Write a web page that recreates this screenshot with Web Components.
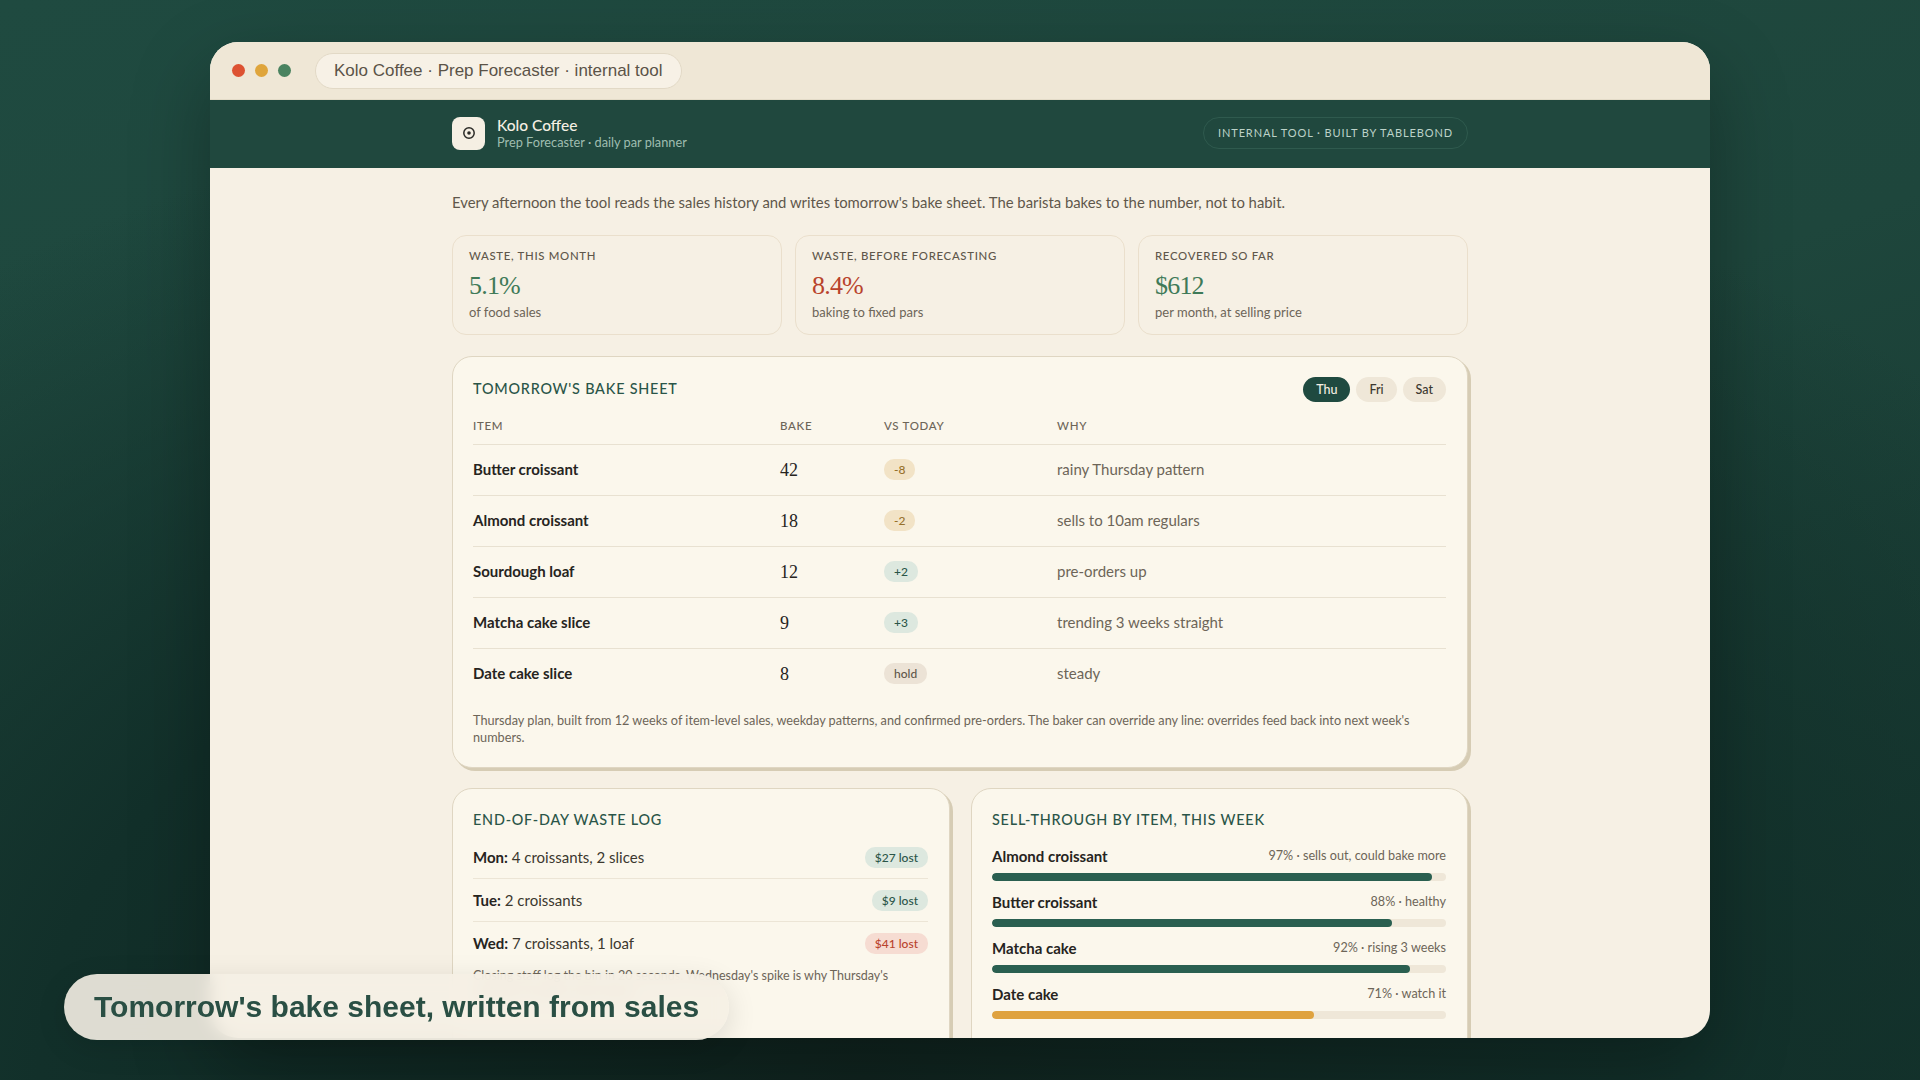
<!DOCTYPE html>
<html>
<head>
<meta charset="utf-8">
<title>Kolo Coffee</title>
<style>
html, body { margin: 0; height: 100%; }
body {
  width: 1920px; height: 1080px; overflow: hidden; position: relative;
  font-family: "Lato", sans-serif;
  background: radial-gradient(ellipse 1500px 1000px at 45% 100%, #10241f 0%, #12302a 55%, transparent 100%), linear-gradient(160deg, #1f4a40 0%, #1e463c 50%, #14332c 100%);
}
</style>
</head>
<body>
<stage-frame>
  <app-window title-text="Kolo Coffee · Prep Forecaster · internal tool">
    <app-header></app-header>
    <page-main>
      <p-intro>Every afternoon the tool reads the sales history and writes tomorrow's bake sheet. The barista bakes to the number, not to habit.</p-intro>
      <kpi-row>
        <kpi-card label="Waste, this month" value="5.1%" sub="of food sales" tone="good"></kpi-card>
        <kpi-card label="Waste, before forecasting" value="8.4%" sub="baking to fixed pars" tone="bad"></kpi-card>
        <kpi-card label="Recovered so far" value="$612" sub="per month, at selling price" tone="good"></kpi-card>
      </kpi-row>
      <bake-sheet></bake-sheet>
      <two-col>
        <waste-log></waste-log>
        <sell-through></sell-through>
      </two-col>
    </page-main>
  </app-window>
  <caption-pill>Tomorrow's bake sheet, written from sales</caption-pill>
</stage-frame>

<script>
const FONT = `"Lato", sans-serif`;
const SERIF = `"Liberation Serif", serif`;

class StageFrame extends HTMLElement {
  constructor() {
    super();
    this.attachShadow({ mode: "open" }).innerHTML = `
      <style>
        :host { display: block; width: 1920px; height: 1080px; padding: 42px 210px; box-sizing: border-box; }
      </style>
      <slot></slot>`;
  }
}

class AppWindow extends HTMLElement {
  constructor() {
    super();
    this.attachShadow({ mode: "open" }).innerHTML = `
      <style>
        :host { display: flex; flex-direction: column; width: 1500px; height: 996px; border-radius: 28px; overflow: hidden;
          background: #f6f0e4; box-shadow: 0 30px 80px rgba(0,0,0,.3); }
        .bar { flex: none; height: 58px; box-sizing: border-box; background: #efe7d6; display: flex; align-items: center; padding: 0 22px; gap: 10px; border-bottom: 1px solid #e3dbc8; }
        .dot { width: 13px; height: 13px; border-radius: 50%; }
        .addr { margin-left: 14px; height: 36px; box-sizing: border-box; padding: 0 18px; display: flex; align-items: center; border-radius: 18px; background: #f7f1e6; border: 1px solid #e2d9c6;
          font: 17px "Liberation Sans", sans-serif; color: #5b5348; white-space: nowrap; }
      </style>
      <div class="bar">
        <span class="dot" style="background:#dd5232"></span>
        <span class="dot" style="background:#dfa53c"></span>
        <span class="dot" style="background:#4a8360"></span>
        <span class="addr">${this.getAttribute("title-text")}</span>
      </div>
      <slot></slot>`;
  }
}

class AppHeader extends HTMLElement {
  constructor() {
    super();
    this.attachShadow({ mode: "open" }).innerHTML = `
      <style>
        :host { display: flex; flex: none; height: 68px; box-sizing: border-box; background: #20483e; padding: 0 242px 2px; align-items: center; justify-content: space-between; font-family: ${FONT}; }
        .brand { display: flex; align-items: center; gap: 12px; }
        .logo { width: 33px; height: 33px; border-radius: 8px; background: #f5efe3; display: flex; align-items: center; justify-content: center; }
        .name { font-size: 15.5px; line-height: 18px; font-weight: 500; color: #f5efe3; }
        .sub { font-size: 12.75px; line-height: 16px; color: #9fbdb0; }
        .tag { height: 32px; box-sizing: border-box; display: flex; align-items: center; padding: 0 14px 1px; border: 1px solid #2f5a4e; border-radius: 16px; font-size: 11px; letter-spacing: .08em; color: #bcd2c8; white-space: nowrap; }
      </style>
      <div class="brand">
        <div class="logo"><svg width="14" height="14" viewBox="0 0 14 14"><circle cx="7" cy="7" r="5.2" fill="none" stroke="#2a2a26" stroke-width="1.5"/><circle cx="7" cy="7" r="1.8" fill="#2a2a26"/></svg></div>
        <div><div class="name">Kolo Coffee</div><div class="sub">Prep Forecaster · daily par planner</div></div>
      </div>
      <div class="tag">INTERNAL TOOL · BUILT BY TABLEBOND</div>`;
  }
}

class PageMain extends HTMLElement {
  constructor() {
    super();
    this.attachShadow({ mode: "open" }).innerHTML = `
      <style>
        :host { display: flex; flex-direction: column; flex: 1; min-height: 0; padding: 24px 242px 0; font-family: ${FONT}; overflow: hidden; }
      </style>
      <slot></slot>`;
  }
}

class PIntro extends HTMLElement {
  constructor() {
    super();
    this.attachShadow({ mode: "open" }).innerHTML = `
      <style>
        :host { display: block; flex: none; font-size: 14.85px; line-height: 20px; color: #5f574b; margin-bottom: 23px; white-space: nowrap; }
      </style>
      <slot></slot>`;
  }
}

class KpiRow extends HTMLElement {
  constructor() {
    super();
    this.attachShadow({ mode: "open" }).innerHTML = `
      <style>
        :host { display: grid; flex: none; grid-template-columns: repeat(3, 1fr); gap: 13px; margin-bottom: 21px; }
      </style>
      <slot></slot>`;
  }
}

class KpiCard extends HTMLElement {
  constructor() {
    super();
    const colors = { good: "#3f7a58", bad: "#b9432c" };
    this.attachShadow({ mode: "open" }).innerHTML = `
      <style>
        :host { display: block; height: 100px; box-sizing: border-box; padding: 12px 16px; border: 1px solid #eadfcc; border-radius: 14px; background: #f6f0e4; }
        .l { font-size: 11.4px; line-height: 16px; letter-spacing: .06em; text-transform: uppercase; color: #5f574b; font-weight: 500; }
        .v { font: 26px/32px ${SERIF}; letter-spacing: -.8px; margin-top: 6px; color: ${colors[this.getAttribute("tone")]}; }
        .s { font-size: 13px; line-height: 16px; margin-top: 2px; color: #6d6558; }
      </style>
      <div class="l">${this.getAttribute("label")}</div>
      <div class="v">${this.getAttribute("value")}</div>
      <div class="s">${this.getAttribute("sub")}</div>`;
  }
}

const panelCss = `
  :host { display: block; box-sizing: border-box; background: #fbf7ec; border: 1px solid #dfd6c2; border-radius: 20px; box-shadow: 3px 3px 0 #d6ccb4; }
  h2 { margin: 0; font-size: 14.4px; line-height: 20px; font-weight: 500; letter-spacing: .055em; text-transform: uppercase; color: #2a5548; }
`;

class DeltaChip extends HTMLElement {
  constructor() {
    super();
    const tones = {
      down: ["#f2e3c6", "#96702a"],
      up: ["#dde8df", "#2a5548"],
      hold: ["#ece3d6", "#5f574b"],
      bad: ["#f6dcd2", "#b9432c"]
    };
    const t = tones[this.getAttribute("tone")];
    this.attachShadow({ mode: "open" }).innerHTML = `
      <style>
        :host { display: inline-flex; align-items: center; height: 21px; padding: 0 10px; border-radius: 10px; font-size: 12px; font-weight: 500; background: ${t[0]}; color: ${t[1]}; white-space: nowrap; }
      </style>
      <slot></slot>`;
  }
}

class BakeSheet extends HTMLElement {
  constructor() {
    super();
    const rows = [
      ["Butter croissant", "42", "down", "-8", "rainy Thursday pattern"],
      ["Almond croissant", "18", "down", "-2", "sells to 10am regulars"],
      ["Sourdough loaf", "12", "up", "+2", "pre-orders up"],
      ["Matcha cake slice", "9", "up", "+3", "trending 3 weeks straight"],
      ["Date cake slice", "8", "hold", "hold", "steady"]
    ];
    this.attachShadow({ mode: "open" }).innerHTML = `
      <style>
        ${panelCss}
        :host { padding: 19px 21px 0 20px; height: 412px; flex: none; }
        .top { display: flex; justify-content: space-between; align-items: center; height: 26px; }
        .days { display: flex; gap: 6px; }
        .day { height: 25px; display: flex; align-items: center; padding: 0 13px; border-radius: 13px; background: #efe7d8; color: #3c382f; font-size: 12.5px; font-weight: 500; }
        .day.on { background: #1f4a40; color: #f5efe3; }
        .row { display: grid; grid-template-columns: 307px 104px 173px 1fr; align-items: center; height: 51px; box-sizing: border-box; padding-bottom: 2px; border-top: 1px solid #e8e1d1; }
        .head { height: 36px; border-top: 0; margin-top: 6px; font-size: 11.5px; letter-spacing: .06em; color: #6d6558; font-weight: 500; }
        .item { font-size: 15px; font-weight: 700; color: #26241e; }
        .n { font: 18px ${SERIF}; color: #26241e; padding-top: 2px; }
        .why { font-size: 15px; color: #6d6558; }
        .note { margin: 13px 0 0; font-size: 12.7px; line-height: 16.5px; color: #6d6558; }
      </style>
      <div class="top"><h2>Tomorrow's bake sheet</h2>
        <div class="days"><span class="day on">Thu</span><span class="day">Fri</span><span class="day">Sat</span></div></div>
      <div class="row head"><span>ITEM</span><span>BAKE</span><span>VS TODAY</span><span>WHY</span></div>
      ${rows.map(r => `<div class="row"><span class="item">${r[0]}</span><span class="n">${r[1]}</span><span><delta-chip tone="${r[2]}">${r[3]}</delta-chip></span><span class="why">${r[4]}</span></div>`).join("")}
      <p class="note">Thursday plan, built from 12 weeks of item-level sales, weekday patterns, and confirmed pre-orders. The baker can override any line: overrides feed back into next week's numbers.</p>`;
  }
}

class TwoCol extends HTMLElement {
  constructor() {
    super();
    this.attachShadow({ mode: "open" }).innerHTML = `
      <style>
        :host { display: grid; grid-template-columns: 498px 497px; gap: 21px; margin-top: 20px; flex: none; height: 340px; }
      </style>
      <slot></slot>`;
  }
}

class WasteLog extends HTMLElement {
  constructor() {
    super();
    const rows = [
      ["Mon:", "4 croissants, 2 slices", "up", "$27 lost"],
      ["Tue:", "2 croissants", "up", "$9 lost"],
      ["Wed:", "7 croissants, 1 loaf", "bad", "$41 lost"]
    ];
    this.attachShadow({ mode: "open" }).innerHTML = `
      <style>
        ${panelCss}
        :host { padding: 21px 21px 20px 20px; }
        h2 { margin-bottom: 6px; }
        .r { display: flex; justify-content: space-between; align-items: center; height: 43px; box-sizing: border-box; font-size: 15px; color: #3c382f; border-bottom: 1px solid #ece5d6; }
        .r:nth-of-type(3) { border-bottom-color: transparent; }
        b { font-weight: 700; color: #26241e; }
        .note { margin: 2px 0 0; font-size: 12.5px; line-height: 17px; color: #6d6558; }
      </style>
      <h2>End-of-day waste log</h2>
      ${rows.map(r => `<div class="r"><span><b>${r[0]}</b> ${r[1]}</span><delta-chip tone="${r[2]}">${r[3]}</delta-chip></div>`).join("")}
      <p class="note">Closing staff log the bin in 20 seconds. Wednesday's spike is why Thursday's croissant number came down.</p>`;
  }
}

class SellThrough extends HTMLElement {
  constructor() {
    super();
    const rows = [
      ["Almond croissant", "97% · sells out, could bake more", 97, "#2a5f50"],
      ["Butter croissant", "88% · healthy", 88, "#2a5f50"],
      ["Matcha cake", "92% · rising 3 weeks", 92, "#2a5f50"],
      ["Date cake", "71% · watch it", 71, "#dfa23f"]
    ];
    this.attachShadow({ mode: "open" }).innerHTML = `
      <style>
        ${panelCss}
        :host { padding: 21px 21px 20px 20px; }
        h2 { margin-bottom: 17px; }
        .i { height: 46px; }
        .t { display: flex; justify-content: space-between; height: 25px; align-items: flex-start; line-height: 18px; }
        .nm { font-size: 15px; font-weight: 700; color: #26241e; }
        .st { font-size: 12.65px; line-height: 16px; margin-top: 1px; color: #6d6558; }
        .track { height: 8px; border-radius: 4px; background: #efe7d8; margin-top: 1px; overflow: hidden; }
        .fill { height: 100%; border-radius: 4px; }
      </style>
      <h2>Sell-through by item, this week</h2>
      ${rows.map(r => `<div class="i"><div class="t"><span class="nm">${r[0]}</span><span class="st">${r[1]}</span></div><div class="track"><div class="fill" style="width:${r[2]}%;background:${r[3]}"></div></div></div>`).join("")}`;
  }
}

class CaptionPill extends HTMLElement {
  constructor() {
    super();
    this.attachShadow({ mode: "open" }).innerHTML = `
      <style>
        :host { position: absolute; left: 64px; top: 974px; height: 66px; box-sizing: border-box; padding: 0 30px; display: flex; align-items: center; border-radius: 33px;
          background: rgba(245,240,228,.9); backdrop-filter: blur(8px); box-shadow: 0 8px 30px rgba(0,0,0,.12);
          font: bold 30px "Liberation Sans", sans-serif; color: #2a4f44; white-space: nowrap; }
      </style>
      <slot></slot>`;
  }
}

customElements.define("stage-frame", StageFrame);
customElements.define("app-window", AppWindow);
customElements.define("app-header", AppHeader);
customElements.define("page-main", PageMain);
customElements.define("p-intro", PIntro);
customElements.define("kpi-row", KpiRow);
customElements.define("kpi-card", KpiCard);
customElements.define("delta-chip", DeltaChip);
customElements.define("bake-sheet", BakeSheet);
customElements.define("two-col", TwoCol);
customElements.define("waste-log", WasteLog);
customElements.define("sell-through", SellThrough);
customElements.define("caption-pill", CaptionPill);
</script>
</body>
</html>
